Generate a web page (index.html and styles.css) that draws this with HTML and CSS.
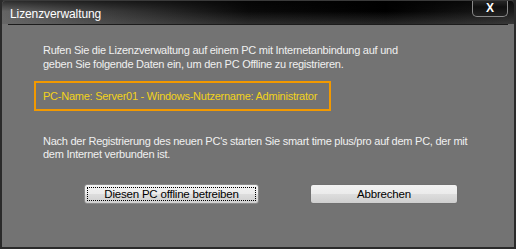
FILE: index.html
```html
<!DOCTYPE html>
<html lang="de">
<head>
  <meta charset="UTF-8">
  <title>Lizenzverwaltung</title>
  <link rel="stylesheet" href="styles.css">
</head>
<body>
  <div class="window">
    <div class="titlebar">
      <span class="title">Lizenzverwaltung</span>
      <span class="close">X</span>
    </div>
    <div class="content">
      <p class="text first">Rufen Sie die Lizenzverwaltung auf einem PC mit Internetanbindung auf und<br>geben Sie folgende Daten ein, um den PC Offline zu registrieren.</p>
      <div class="info">PC-Name: Server01 - Windows-Nutzername: Administrator</div>
      <p class="text">Nach der Registrierung des neuen PC's starten Sie smart time plus/pro auf dem PC, der mit<br>dem Internet verbunden ist.</p>
      <div class="buttons">
        <button class="btn btn-offline"><span class="focus">Diesen PC offline betreiben</span></button>
        <button class="btn btn-cancel">Abbrechen</button>
      </div>
    </div>
  </div>
</body>
</html>
```

FILE: styles.css
```css
body {
  margin: 0;
  padding: 0;
  background: #2b2b2b;
  font-family: 'Liberation Sans', Arial, sans-serif;
}
.window {
  width: 516px;
  height: 249px;
  box-sizing: border-box;
  background: #737373;
  border: 2px solid #2a2a2a;
  border-top: 1px solid #3a3a3a;
  border-radius: 5px 5px 0 0;
  overflow: hidden;
  display: flex;
  flex-direction: column;
}
.titlebar {
  height: 22px;
  margin: 0 6px;
  border-bottom: 2px solid #1c1c1c;
  display: flex;
  align-items: flex-start;
  justify-content: space-between;
  position: relative;
}
.titlebar::before {
  content: '';
  position: absolute;
  left: -6px;
  right: -6px;
  top: 0;
  bottom: -1px;
  background:
    linear-gradient(to bottom, rgba(0,0,0,0.55) 0%, rgba(0,0,0,0) 45%, rgba(110,110,110,0.35) 100%),
    linear-gradient(to right, #646464 0%, #3c3c3c 20%, #0a0a0a 48%, #000 75%, #1c1c1c 100%);
}
.title {
  position: relative;
  color: #fff;
  font-size: 12px;
  letter-spacing: -0.1px;
  padding: 6px 0 0 2px;
}
.close {
  position: relative;
  width: 36px;
  height: 16px;
  box-sizing: border-box;
  border: 1px solid #8a8a8a;
  border-top: none;
  border-radius: 0 0 5px 5px;
  background: linear-gradient(to bottom, #262626, #101010 40%, #222);
  color: #fff;
  font-weight: bold;
  font-size: 12px;
  text-align: center;
  line-height: 14px;
}
.content {
  flex: 1;
  padding: 18px 0 0 41px;
  color: #f0f0f0;
  font-size: 11px;
}
.text {
  margin: 0;
  line-height: 13px;
  letter-spacing: -0.25px;
  white-space: nowrap;
}
.text.first {
  line-height: 14px;
}
.info {
  margin: 10px 0 24px -9px;
  width: 297px;
  height: 30px;
  box-sizing: border-box;
  border: 2px solid #f29900;
  color: #f2d21a;
  padding: 7px 0 0 7px;
  line-height: 13px;
  letter-spacing: -0.25px;
  white-space: nowrap;
}
.buttons {
  display: flex;
  gap: 51px;
  margin: 23px 0 0 41px;
}
.btn {
  height: 20px;
  box-sizing: border-box;
  border: 1px solid #707070;
  border-radius: 3px;
  background: linear-gradient(to bottom, #f2f2f2 0%, #ebebeb 50%, #dddddd 51%, #cfcfcf 100%);
  color: #000;
  font-family: 'Liberation Sans', Arial, sans-serif;
  font-size: 11.5px;
  letter-spacing: -0.2px;
  padding: 0;
}
.btn-offline {
  width: 175px;
  padding: 2px;
  border-color: #8a8a8a;
}
.btn-offline .focus {
  display: block;
  height: 100%;
  box-sizing: border-box;
  border: 1px dotted #000;
  line-height: 12px;
}
.btn-cancel {
  width: 148px;
}
```
